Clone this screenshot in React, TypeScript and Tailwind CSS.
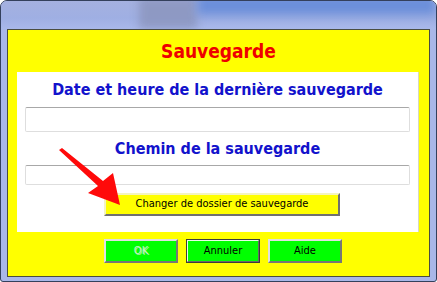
import { FC } from 'react';

const font = { fontFamily: 'Tahoma, "DejaVu Sans Condensed", "DejaVu Sans", sans-serif' };

const GreenButton: FC<{ label: string; variant?: 'disabled' | 'default' | 'normal' }> = ({
	label,
	variant = 'normal'
}) => {
	if (variant === 'default') {
		return (
			<div className="h-[24px] w-[74px] border border-[#3c3c3c] bg-[#00ff00]">
				<div className="flex h-full w-full items-center justify-center border border-t-[#e8ffe8] border-l-[#e8ffe8] border-r-[#6a6a6a] border-b-[#6a6a6a] text-[11px] text-black">
					{label}
				</div>
			</div>
		);
	}
	return (
		<div className="flex h-[24px] w-[74px] items-center justify-center border-2 border-t-[#e0e0e0] border-l-[#e0e0e0] border-r-[#777777] border-b-[#777777] bg-[#00ff00] text-[11px]">
			<span
				className={
					variant === 'disabled'
						? 'text-[#c4f4c4] [text-shadow:1px_1px_0_#a0f0a0]'
						: 'text-black'
				}
			>
				{label}
			</span>
		</div>
	);
};

const App: FC = () => {
	return (
		<div className="h-[282px] w-[437px] overflow-hidden bg-white" style={font}>
			<div className="relative flex h-full flex-col overflow-hidden rounded-t-[7px] rounded-b-[3px] border border-[#34405c] bg-[#a9b7e8]">
				{/* aero title bar */}
				<div className="flex h-[28px] shrink-0 overflow-hidden bg-[linear-gradient(180deg,#a5b1e0_0%,#9fafe3_60%,#a9b8ea_100%)]">
					<div className="w-[138px]" />
					<div className="mt-[-4px] h-[32px] w-[58px] bg-[#8a94bc] opacity-80 blur-[4px]" />
					<div className="mt-[-6px] h-[20px] flex-1 bg-[#6b8fda] blur-[5px]" />
				</div>

				<div className="flex flex-1 flex-col px-[6px] pb-[4px]">
					<div className="flex flex-1 flex-col border border-[#4a4d40] bg-[#ffff00]">
						<div className="flex h-[42px] items-center justify-center text-[19px] font-bold text-[#ee0000]">
							Sauvegarde
						</div>

						<div className="relative ml-[9px] flex h-[160px] w-[402px] flex-col border-r border-[#d8d8c0] bg-white px-[8px]">
							<div className="flex h-[35px] items-center justify-center text-[16px] font-bold text-[#1212cc]">
								Date et heure de la dernière sauvegarde
							</div>
							<div className="h-[25px] rounded-[2px] border border-[#dedede] border-t-[#a8a8a8]" />
							<div className="flex h-[33px] items-center justify-center text-[16px] font-bold text-[#1212cc]">
								Chemin de la sauvegarde
							</div>
							<div className="h-[20px] rounded-[2px] border border-[#dedede] border-t-[#a8a8a8]" />
							<div className="mt-[8px] ml-[79px] flex h-[23px] w-[236px] items-center justify-center border-2 border-t-[#f4f4c0] border-l-[#f4f4c0] border-r-[#707070] border-b-[#707070] bg-[#ffff00] text-[11px] text-black">
								Changer de dossier de sauvegarde
							</div>

							<svg
								className="pointer-events-none absolute top-0 left-0"
								width="402"
								height="160"
								viewBox="17 72 402 160"
							>
								<polygon
									fill="#ff0a0a"
									points="59,150 62,148 103,181 113,173 120,205 88,193 98,186"
								/>
							</svg>
						</div>

						<div className="mt-[7px] flex gap-[8px] pl-[96px]">
							<GreenButton label="OK" variant="disabled" />
							<GreenButton label="Annuler" variant="default" />
							<GreenButton label="Aide" />
						</div>
					</div>
				</div>
			</div>
		</div>
	);
};

export default App;
